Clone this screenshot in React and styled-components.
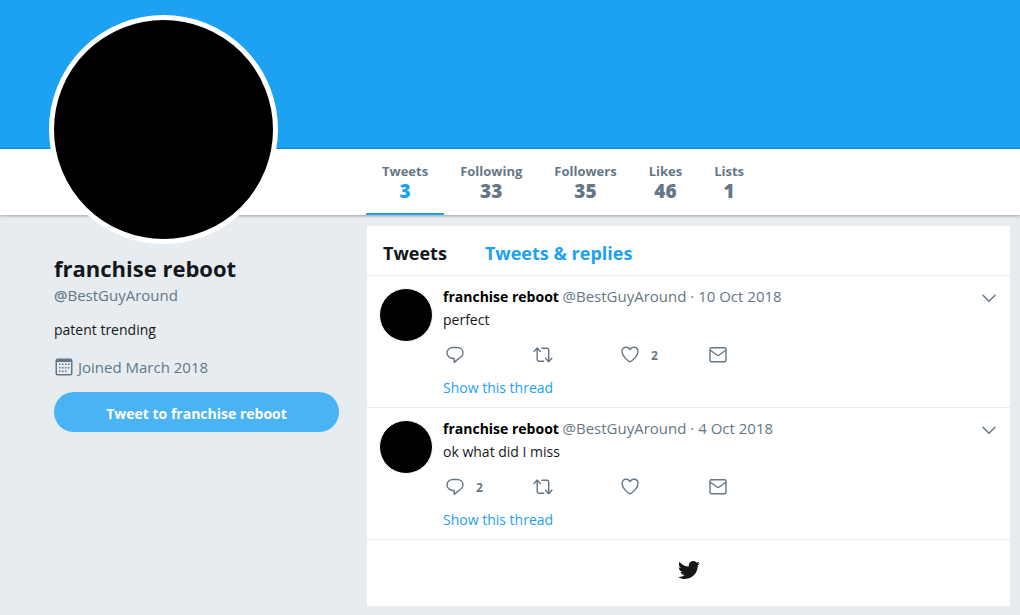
import { useState } from "react";
import styled, { createGlobalStyle } from "styled-components"
import { FaTwitter } from "react-icons/fa"


const stats=[
    {label:"Tweets",value:3},
    {label:"Following",value:33},
    {label:"Followers",value:35},
    {label:"Likes",value:46},
    {label:"Lists",value:1},
]

const tweets=[
    {id:1,date:"10 Oct 2018",text:"perfect",replies:null,likes:2},
    {id:2,date:"4 Oct 2018",text:"ok what did I miss",replies:2,likes:null},
]

const ReplyIcon=()=>(
    <Icon width="18" height="18" viewBox="0 0 18 18">
        <path d="M7 1.500h4c3.400 0 6 2.200 6 5.300 0 2.600-1.600 4.200-4 5.600l-4.800 4v-3.900H7c-3.400 0-6-2.500-6-5.700s2.600-5.300 6-5.300z" />
    </Icon>
)

const RetweetIcon=()=>(
    <Icon width="20" height="18" viewBox="0 0 20 18">
        <path d="M1 5.500l3.200-3.500 3.200 3.500M4.200 2.300v11c0 1.200.7 1.900 1.900 1.900h4.600M8.900 2.300h4.900c1.200 0 1.900.7 1.900 1.900v11M12.500 12.200l3.200 3.500 3.200-3.500" />
    </Icon>
)

const HeartIcon=()=>(
    <Icon width="18" height="18" viewBox="0 0 18 18">
        <path d="M9 15.800C6.200 14.300 1 10.200 1 5.600c0-2.500 1.700-4.400 4.100-4.400C6.800 1.200 8.200 2.100 9 3.800c.8-1.700 2.200-2.600 3.900-2.600C15.300 1.200 17 3.100 17 5.600c0 4.600-5.200 8.700-8 10.200z" />
    </Icon>
)

const MailIcon=()=>(
    <Icon width="18" height="18" viewBox="0 0 18 18">
        <rect x="1" y="1.800" width="16" height="14" rx="1.500" />
        <path d="M1.300 4.300l6.600 4.700c.7.500 1.500.5 2.200 0l6.600-4.700" />
    </Icon>
)

const CalendarIcon=()=>(
    <svg width="19" height="18" viewBox="-1 0 19 18" fill="#657786" aria-hidden="true">
        <path fillRule="evenodd" d="M2.500.5h13a2 2 0 0 1 2 2v13a2 2 0 0 1-2 2h-13a2 2 0 0 1-2-2v-13a2 2 0 0 1 2-2zM2 4v11.500c0 .3.200.5.500.5h13c.3 0 .5-.2.500-.5V4z" />
        <path d="M7 5.500h1.500V7H7zM10 5.500h1.500V7H10zM13 5.500h1.500V7H13zM4 9h1.500v1.500H4zM7 9h1.500v1.500H7zM10 9h1.500v1.500H10zM13 9h1.500v1.500H13zM4 12.500h1.500V14H4zM7 12.500h1.500V14H7zM10 12.500h1.500V14H10zM4 5.500h1.500V7H4z" />
    </svg>
)

const Tweet=({tweet})=>(
    <TweetRow>
        <SmallAvatar />
        <TweetBody>
            <TweetHead>
                <p><b>franchise reboot</b> <span>@BestGuyAround · {tweet.date}</span></p>
                <IconButton aria-label="More">
                    <Icon width="14" height="9" viewBox="0 0 14 9" $stroke="1.500"><path d="M1 1.200l6 6 6-6" /></Icon>
                </IconButton>
            </TweetHead>
            <p>{tweet.text}</p>
            <Actions>
                <IconButton aria-label="Reply"><ReplyIcon />{tweet.replies}</IconButton>
                <IconButton aria-label="Retweet"><RetweetIcon /></IconButton>
                <IconButton aria-label="Like"><HeartIcon />{tweet.likes}</IconButton>
                <IconButton aria-label="Direct message"><MailIcon /></IconButton>
            </Actions>
            <ThreadLink href="#thread">Show this thread</ThreadLink>
        </TweetBody>
    </TweetRow>
)

const App = () => {
    const [active,setActive]=useState("Tweets")

  return (
    <>
    <GlobalStyle />
    <Banner />
    <Nav>
        {stats.map((el)=>(
            <Stat key={el.label} href="#stats" $active={active===el.label} onClick={()=>setActive(el.label)}>
                {el.label}
                <strong>{el.value}</strong>
            </Stat>
        ))}
    </Nav>
    <Container>
        <Sidebar>
            <Avatar />
            <Name>franchise reboot</Name>
            <Handle><b>@</b>BestGuyAround</Handle>
            <Bio>patent trending</Bio>
            <Joined><CalendarIcon />Joined March 2018</Joined>
            <TweetButton>Tweet to franchise reboot</TweetButton>
        </Sidebar>
        <Timeline>
            <Heading>
                <h2>Tweets</h2>
                <a href="#replies">Tweets &amp; replies</a>
            </Heading>
            {tweets.map((el)=><Tweet key={el.id} tweet={el} />)}
            <Footer><FaTwitter size={22} /></Footer>
        </Timeline>
    </Container>
    </>
  )
}

export default App


const GlobalStyle=createGlobalStyle`
*{
    box-sizing: border-box;
}
body{
    margin: 0;
    background: #e6ecf0;
    color: #14171a;
    font: 15px/22px "Open Sans", "Noto Sans", sans-serif;
}
h1,h2,p{
    margin: 0;
}
a{
    color: #1da1f2;
    text-decoration: none;
}
button{
    font-family: inherit;
    cursor: pointer;
}
`
const Banner=styled.div`
    height: 149px;
    background: #1da1f2;
    border-bottom: 1px solid #1a8fd8;
`
const Nav=styled.nav`
    display: flex;
    height: 66px;
    padding-left: 366px;
    background: #fff;
    box-shadow: 0 1px 3px rgba(0, 0, 0, 0.3);
`
const Stat=styled.a`
    display: flex;
    flex-direction: column;
    align-items: center;
    padding: 13px 16px 0;
    font-size: 13px;
    line-height: 18px;
    font-weight: bold;
    color: #657786;
    border-bottom: 2px solid ${props=>props.$active?"#1da1f2":"transparent"};
    strong{
        font-size: 19px;
        line-height: 22px;
        color: ${props=>props.$active?"#1da1f2":"inherit"};
    }
`
const Container=styled.div`
    display: grid;
    grid-template-columns: 285px 1fr;
    gap: 28px;
    padding: 0 10px 9px 54px;
`
const Sidebar=styled.aside`
    position: relative;
`
const Avatar=styled.div`
    width: 229px;
    height: 229px;
    margin: -200px 0 0 -5px;
    border-radius: 50%;
    border: 5px solid #fff;
    background: #000;
`
const Name=styled.h1`
    margin-top: 9px;
    font-size: 22px;
    line-height: 30px;
`
const Handle=styled.p`
    margin-top: 1px;
    color: #657786;
    b{
        font-weight: 600;
    }
`
const Bio=styled.p`
    margin-top: 13px;
    font-size: 14px;
`
const Joined=styled.p`
    display: flex;
    align-items: center;
    gap: 5px;
    margin-top: 15px;
    color: #657786;
`
const TweetButton=styled.button`
    width: 100%;
    height: 40px;
    margin-top: 14px;
    border: 0;
    border-radius: 20px;
    background: #4ab3f4;
    color: #fff;
    font-size: 14px;
    font-weight: bold;
    padding-top: 4px;
`
const Timeline=styled.main`
    margin-top: 11px;
    background: #fff;
`
const Heading=styled.div`
    display: flex;
    gap: 38px;
    height: 50px;
    padding: 4px 16px 0;
    align-items: center;
    border-bottom: 1px solid #e6ecf0;
    h2,a{
        font-size: 18px;
        line-height: 24px;
        font-weight: bold;
    }
`
const TweetRow=styled.article`
    display: flex;
    gap: 10px;
    padding: 9px 12px 8px;
    border-bottom: 1px solid #e6ecf0;
`
const SmallAvatar=styled.div`
    flex: none;
    width: 54px;
    height: 54px;
    margin-top: 3px;
    border: 1px solid #fff;
    border-radius: 50%;
    background: #000;
`
const TweetBody=styled.div`
    flex: 1;
    font-size: 14px;
`
const TweetHead=styled.div`
    display: flex;
    justify-content: space-between;
    align-items: flex-end;
    height: 24px;
    p{
        align-self: flex-start;
    }
    b{
        color: #000;
    }
    span{
        font-size: 15px;
        color: #657786;
    }
`
const Actions=styled.div`
    display: grid;
    grid-template-columns: 87px 88px 88px 88px;
    align-items: center;
    padding-left: 3px;
    margin: 13px 0 11px;
`
const IconButton=styled.button`
    display: flex;
    align-items: center;
    gap: 12px;
    height: 22px;
    padding: 0 2px 0 0;
    border: 0;
    background: none;
    color: #657786;
    font-size: 12px;
    font-weight: bold;
`
const Icon=styled.svg`
    flex: none;
    fill: none;
    stroke: #657786;
    stroke-width: ${props=>props.$stroke || "1.400"};
    stroke-linejoin: round;
    stroke-linecap: round;
`
const ThreadLink=styled.a`
    display: block;
`
const Footer=styled.footer`
    display: flex;
    justify-content: center;
    align-items: center;
    height: 66px;
    padding-bottom: 6px;
`
